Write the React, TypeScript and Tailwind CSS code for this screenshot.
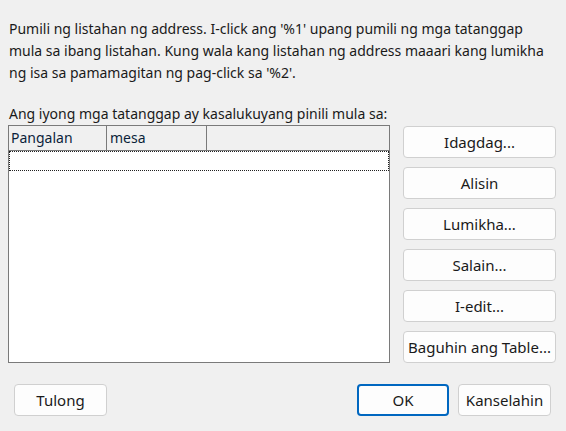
import React from 'react';

const sideButtons = ['Idagdag...', 'Alisin', 'Lumikha...', 'Salain...', 'I-edit...', 'Baguhin ang Table...'];

function Btn({ label, primary, className }: { label: string; primary?: boolean; className?: string }) {
  return (
    <button
      className={
        'h-[32px] rounded-[4px] bg-[#fdfdfd] text-[15px] text-[#1a1a1a] ' +
        (primary ? 'border-2 border-[#0067c0] ' : 'border border-[#d0d0d0] ') +
        (className ?? '')
      }
    >
      {label}
    </button>
  );
}

export default function App() {
  return (
    <div
      className="w-[566px] h-[431px] bg-[#f0f0f0] text-[#1a1a1a] flex flex-col overflow-hidden"
      style={{ fontFamily: '"Noto Sans", "Open Sans", sans-serif' }}
    >
      <div className="pl-[9px] pt-[18px] text-[14px] leading-[22px]">
        <p>
          Pumili ng listahan ng address. I-click ang '%1' upang pumili ng mga tatanggap
          <br />
          mula sa ibang listahan. Kung wala kang listahan ng address maaari kang lumikha
          <br />
          ng isa sa pamamagitan ng pag-click sa '%2'.
        </p>
        <p className="mt-[19px]">Ang iyong mga tatanggap ay kasalukuyang pinili mula sa:</p>
      </div>

      <div className="flex ml-[8px]">
        <div className="w-[382px] h-[238px] border border-[#7a7a7a] bg-white flex flex-col">
          <div className="h-[25px] flex bg-[#f0f0f0] border-b border-[#7a7a7a] text-[14px] text-[#0b1f3a]">
            <div className="w-[98px] border-r border-[#7a7a7a] pl-[2px] leading-[24px]">Pangalan</div>
            <div className="w-[100px] border-r border-[#7a7a7a] pl-[3px] leading-[24px]">mesa</div>
            <div className="flex-1" />
          </div>
          <div className="h-[20px] border border-dotted border-[#202020]" />
        </div>

        <div className="ml-[13px] w-[153px] flex flex-col gap-[9px] pt-px">
          {sideButtons.map((b) => (
            <Btn key={b} label={b} className="w-full" />
          ))}
        </div>
      </div>

      <div className="flex mt-[21px] pl-[14px]">
        <Btn label="Tulong" className="w-[93px]" />
        <Btn label="OK" primary className="w-[92px] ml-[250px]" />
        <Btn label="Kanselahin" className="w-[93px] ml-[9px]" />
      </div>
    </div>
  );
}
